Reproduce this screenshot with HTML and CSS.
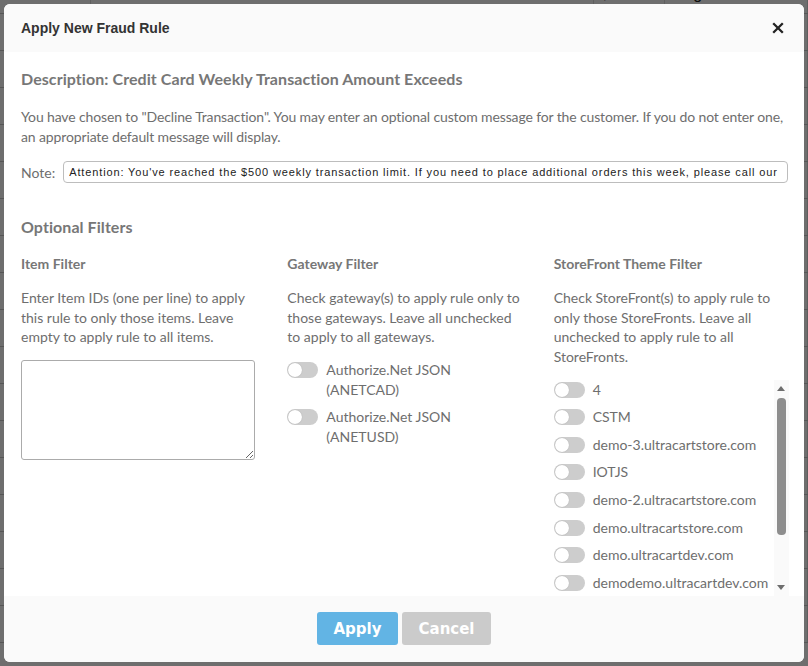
FILE: index.html
```html
<!DOCTYPE html>
<html>
<head>
  <meta charset="utf-8" />
  <title>Fraud Rules</title>
  <meta name="viewport" content="width=device-width, initial-scale=1">
  <link rel="stylesheet" href="styles.css">
</head>
<body>
  <div class="page">
    <table class="rules">
      <tr><td>Credit card</td><td>transaction exceeds</td><td>$</td><td>Flag</td></tr>
      <tr><td>t</td><td></td><td></td><td></td></tr>
      <tr><td>t</td><td></td><td></td><td></td></tr>
      <tr><td>t</td><td></td><td></td><td></td></tr>
      <tr><td>t</td><td></td><td></td><td></td></tr>
      <tr><td>s</td><td></td><td></td><td></td></tr>
      <tr><td></td><td></td><td></td><td></td></tr>
      <tr><td></td><td></td><td></td><td></td></tr>
      <tr><td>t</td><td></td><td></td><td></td></tr>
      <tr><td>s</td><td></td><td></td><td></td></tr>
      <tr><td>s</td><td></td><td></td><td></td></tr>
      <tr><td>l</td><td></td><td></td><td></td></tr>
      <tr><td>r</td><td></td><td></td><td></td></tr>
      <tr><td></td><td></td><td></td><td></td></tr>
      <tr><td></td><td></td><td></td><td></td></tr>
      <tr><td></td><td></td><td></td><td></td></tr>
      <tr><td></td><td></td><td></td><td></td></tr>
      <tr><td></td><td></td><td></td><td></td></tr>
    </table>
  </div>
  <div class="overlay"></div>

  <div class="modal">
    <div class="modal-header">
      <h4>Apply New Fraud Rule</h4>
      <button class="close" title="Close">
        <svg width="12" height="12" viewBox="0 0 12 12"><path d="M1.2 1.2 L10.8 10.8 M10.8 1.2 L1.2 10.8" stroke="#222" stroke-width="2.3" stroke-linecap="butt"/></svg>
      </button>
    </div>

    <div class="modal-body">
      <h3>Description: Credit Card Weekly Transaction Amount Exceeds</h3>
      <p class="intro">You have chosen to "Decline Transaction". You may enter an optional custom message for the customer. If you do not enter one, an appropriate default message will display.</p>
      <div class="note-row">
        <label for="note">Note:</label>
        <input id="note" type="text" value="Attention: You've reached the $500 weekly transaction limit. If you need to place additional orders this week, please call our customer service team.">
      </div>

      <h3 class="filters-title">Optional Filters</h3>
      <div class="filters">
        <div class="filter">
          <h4>Item Filter</h4>
          <p>Enter Item IDs (one per line) to apply this rule to only those items. Leave empty to apply rule to all items.</p>
          <textarea></textarea>
        </div>

        <div class="filter">
          <h4>Gateway Filter</h4>
          <p>Check gateway(s) to apply rule only to those gateways. Leave all unchecked to apply to all gateways.</p>
          <ul class="toggles">
            <li><span class="toggle"></span><span>Authorize.Net JSON<br>(ANETCAD)</span></li>
            <li><span class="toggle"></span><span>Authorize.Net JSON<br>(ANETUSD)</span></li>
          </ul>
        </div>

        <div class="filter">
          <h4>StoreFront Theme Filter</h4>
          <p>Check StoreFront(s) to apply rule to only those StoreFronts. Leave all unchecked to apply rule to all StoreFronts.</p>
          <div class="store-box">
            <ul class="toggles store-list">
              <li><span class="toggle"></span><span>4</span></li>
              <li><span class="toggle"></span><span>CSTM</span></li>
              <li><span class="toggle"></span><span>demo-3.ultracartstore.com</span></li>
              <li><span class="toggle"></span><span>IOTJS</span></li>
              <li><span class="toggle"></span><span>demo-2.ultracartstore.com</span></li>
              <li><span class="toggle"></span><span>demo.ultracartstore.com</span></li>
              <li><span class="toggle"></span><span>demo.ultracartdev.com</span></li>
              <li><span class="toggle"></span><span>demodemo.ultracartdev.com</span></li>
              <li><span class="toggle"></span><span>test.ultracartstore.com</span></li>
              <li><span class="toggle"></span><span>www.ultracartstore.com</span></li>
            </ul>
            <div class="scrollbar">
              <span class="arrow arrow-up"></span>
              <span class="track"><span class="thumb"></span></span>
              <span class="arrow arrow-down"></span>
            </div>
          </div>
        </div>
      </div>
    </div>

    <div class="modal-footer">
      <button class="btn btn-apply">Apply</button>
      <button class="btn btn-cancel">Cancel</button>
    </div>
  </div>
</body>
</html>
```

FILE: styles.css
```css
* { box-sizing: border-box; }
body { margin: 0; background: #fff; font-family: Lato, "Noto Sans", sans-serif; color: #6e6e6e; }

/* page behind the dialog */
.rules { width: 100%; border-collapse: collapse; margin-top: -24px; font: 16px "Liberation Sans", Arial, sans-serif; color: #222; }
.rules td { height: 37px; padding: 0 6px; border-bottom: 1px solid #c8c8c8; border-right: 1px solid #ddd; white-space: nowrap; }
.rules td:first-child { width: 12px; }
.overlay { position: fixed; top: 0; right: 0; bottom: 0; left: 0; background: rgba(0, 0, 0, .57); }

/* dialog */
.modal { position: fixed; top: 4px; left: 4px; width: 800px; height: 658px; display: flex; flex-direction: column; background: #fff; border-radius: 6px; overflow: hidden; }
.modal-header { height: 48px; flex: none; display: flex; align-items: center; justify-content: space-between; padding: 0 20px 0 17px; background: #fafafa; }
.modal-header h4 { margin: 0; font: bold 14px "Liberation Sans", Arial, sans-serif; color: #333; }
.close { width: 12px; height: 12px; padding: 0; border: 0; background: none; display: flex; }

.modal-body { flex: 1; min-height: 0; padding: 17px 16px 0 17px; overflow: hidden; }
.modal-body h3 { margin: 0 0 18px; font-size: 16px; line-height: 20px; font-weight: bold; color: #777; letter-spacing: .07px; }
.modal-body p { margin: 0 0 15px; font-size: 14px; line-height: 19.6px; }
.modal-body p.intro { letter-spacing: -.13px; }

.note-row { display: flex; align-items: center; gap: 8px; font-size: 14px; }
.note-row input { flex: 1; height: 22px; padding: 0 8px 0 5px; border: 1px solid #bdbdbd; border-radius: 4px; font: 11px "Liberation Sans", Arial, sans-serif; letter-spacing: .87px; color: #222; outline: none; }

.modal-body h3.filters-title { margin: 34px 0 17px; }
.filters { display: grid; grid-template-columns: 1fr 1fr 1fr; column-gap: 32px; }
.filter h4 { margin: 0 0 14px; font-size: 14px; line-height: 20px; font-weight: bold; color: #777; }
.filter p { margin-bottom: 13px; }
.filter textarea { display: block; width: 100%; height: 100px; border: 1px solid #ababab; border-radius: 3px; }

.toggles { list-style: none; margin: 0; padding: 0; font-size: 14px; line-height: 19.6px; }
.toggles li { display: flex; align-items: flex-start; gap: 8px; margin-bottom: 8px; }
.toggle { flex: none; position: relative; width: 31px; height: 16px; margin-top: 2px; border-radius: 8px; background: #cdcdcd; }
.toggle::before { content: ""; position: absolute; top: 1px; left: 1px; width: 14px; height: 14px; border-radius: 50%; background: #fff; box-shadow: 0 0 1px rgba(0, 0, 0, .25); }

/* storefront list with its scrollbar */
.store-box { display: flex; height: 216px; margin-right: -1px; }
.store-list { flex: 1; min-width: 0; overflow: hidden; }
.scrollbar { flex: none; width: 15px; display: flex; flex-direction: column; align-items: center; background: #fafafa; }
.arrow { flex: none; width: 0; height: 0; margin: 6px 0; border-left: 4.5px solid transparent; border-right: 4.5px solid transparent; }
.arrow-up { border-bottom: 5px solid #6e6e6e; }
.arrow-down { border-top: 5px solid #6e6e6e; }
.track { flex: 1; width: 100%; padding: 1px 3px 0 3.5px; }
.thumb { display: block; height: 137px; border-radius: 4px; background: #8e8e8e; }

.modal-footer { height: 66px; flex: none; display: flex; justify-content: center; align-items: flex-start; gap: 4px; padding-top: 16px; background: #fafafa; }
.btn { height: 33px; padding: 0 16.5px; border: 0; border-radius: 3px; font: bold 15px "DejaVu Sans", Verdana, sans-serif; color: #fff; }
.btn-apply { background: #62b4e4; }
.btn-cancel { background: #cbcbcb; }
```
